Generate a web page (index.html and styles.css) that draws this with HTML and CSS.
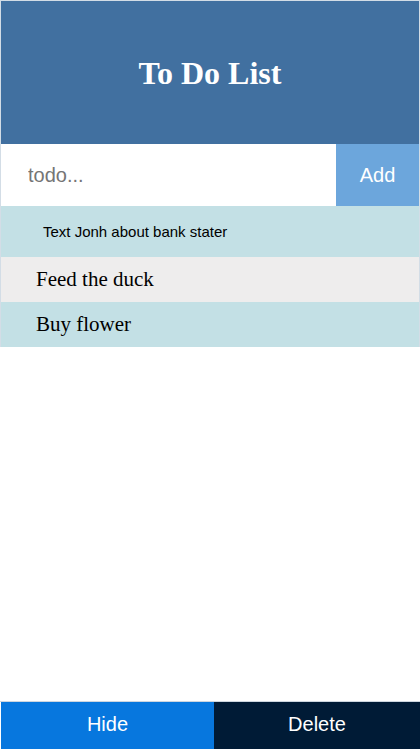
FILE: index.html
```html
<!DOCTYPE html>
<html lang="en">
<head>
<meta charset="utf-8">
<title>To Do List</title>
<link rel="stylesheet" href="styles.css">
</head>
<body>
<div class="app">
  <div class="card">
    <header class="header">
      <h1 class="title">To Do List</h1>
    </header>
    <form class="add-row">
      <input class="todo-input" type="text" placeholder="todo...">
      <button class="add-btn" type="button">Add</button>
    </form>
    <ul class="list">
      <li class="item item-first">Text Jonh about bank stater</li>
      <li class="item item-gray">Feed the duck</li>
      <li class="item">Buy flower</li>
    </ul>
  </div>
  <div class="spacer"></div>
  <footer class="footer">
    <button class="foot-btn hide-btn" type="button">Hide</button>
    <button class="foot-btn delete-btn" type="button">Delete</button>
  </footer>
</div>
</body>
</html>
```

FILE: styles.css
```css
html, body {
  margin: 0;
  padding: 0;
  background: #ffffff;
}

.app {
  height: 749px;
  display: flex;
  flex-direction: column;
  box-sizing: border-box;
}

.card {
  border: 1px solid #d3dde6;
  border-bottom: none;
}

.spacer {
  flex: 1;
}

.header {
  height: 143px;
  background: #4170a0;
  display: flex;
  align-items: center;
  justify-content: center;
}

.title {
  margin: 0;
  color: #ffffff;
  font-family: "Liberation Serif", "Times New Roman", serif;
  font-weight: bold;
  font-size: 32px;
  padding-top: 2px;
}

.add-row {
  display: flex;
  height: 62px;
  margin: 0;
}

.todo-input {
  flex: 1;
  min-width: 0;
  border: none;
  outline: none;
  margin: 0;
  padding: 0 0 0 27px;
  font-family: "Liberation Sans", Arial, sans-serif;
  font-size: 20px;
  color: #333;
  background: #ffffff;
}

.todo-input::placeholder {
  color: #757575;
}

.add-btn {
  width: 83px;
  border: none;
  margin: 0;
  padding: 0;
  background: #6ca6dc;
  color: #ffffff;
  font-family: "Liberation Sans", Arial, sans-serif;
  font-size: 20px;
}

.list {
  list-style: none;
  margin: 0;
  padding: 0;
}

.item {
  height: 45px;
  display: flex;
  align-items: center;
  padding-left: 35px;
  background: #c3e0e5;
  font-family: "Liberation Serif", "Times New Roman", serif;
  font-size: 21px;
  color: #000;
}

.item-first {
  height: 51px;
  padding-left: 42px;
  font-family: "Liberation Sans", Arial, sans-serif;
  font-size: 15px;
}

.item-gray {
  background: #eeeded;
}

.footer {
  display: flex;
  height: 48px;
  padding-left: 1px;
  border-top: 1px solid #cdd6df;
  box-sizing: border-box;
}

.foot-btn {
  border: none;
  margin: 0;
  padding: 0 0 2px;
  color: #ffffff;
  font-family: "Liberation Sans", Arial, sans-serif;
  font-size: 20px;
}

.hide-btn {
  width: 213px;
  background: #0777de;
}

.delete-btn {
  flex: 1;
  background: #001b36;
}
```
